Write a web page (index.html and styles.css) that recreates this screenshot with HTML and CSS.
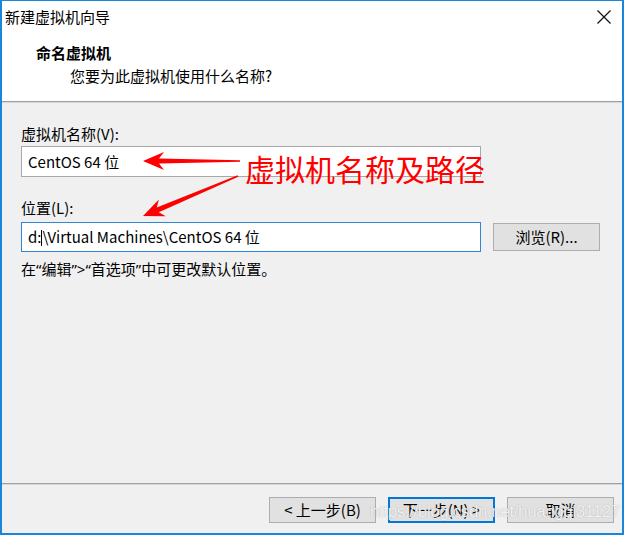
FILE: index.html
```html
<!DOCTYPE html>
<html lang="zh-CN">
<head>
<meta charset="utf-8">
<title>新建虚拟机向导</title>
<link rel="stylesheet" href="styles.css">
</head>
<body>
<div class="window">
  <div class="titlebar">
    <span class="title">新建虚拟机向导</span>
    <svg class="close" width="14" height="14" viewBox="0 0 14 14"><path d="M0.5 0.5 L13.5 13.5 M13.5 0.5 L0.5 13.5" stroke="#111" stroke-width="1.2" fill="none"/></svg>
  </div>
  <div class="header">
    <div class="heading">命名虚拟机</div>
    <div class="subheading">您要为此虚拟机使用什么名称?</div>
  </div>
  <div class="sep"></div>
  <div class="content">
    <div class="label first">虚拟机名称(V):</div>
    <div class="field name">CentOS 64 位</div>
    <div class="label second">位置(L):</div>
    <div class="row">
      <div class="field path focused">d:<span class="caret"></span>\Virtual Machines\CentOS 64 位</div>
      <div class="btn browse">浏览(R)...</div>
    </div>
    <div class="hint">在<span class="q">“</span>编辑<span class="q">”&gt;“</span>首选项<span class="q">”</span>中可更改默认位置。</div>
  </div>
  <div class="sep"></div>
  <div class="footer">
    <div class="btn">&lt; 上一步(B)</div>
    <div class="btn default">下一步(N) &gt;</div>
    <div class="btn">取消</div>
  </div>

  <div class="note">虚拟机名称及路径</div>
  <svg class="arrows" width="624" height="535" viewBox="0 0 624 535">
    <g transform="translate(143 161)">
      <polygon points="0,0 21,-9 16,-2.6 97,-0.8 97,0.8 16,2.6 21,9" fill="#ff0000"/>
    </g>
    <g transform="translate(143 216) rotate(-22.8)">
      <polygon points="0,0 21,-9 16,-2.6 103,-0.8 103,0.8 16,2.6 21,9" fill="#ff0000"/>
    </g>
  </svg>
  <div class="watermark">https://blog.csdn.net/huangqi31127</div>
</div>
</body>
</html>
```
FILE: styles.css
```css
html, body {
  margin: 0;
  padding: 0;
  background: #ffffff;
}

.window {
  position: relative;
  width: 624px;
  height: 535px;
  box-sizing: border-box;
  border: 2px solid #1a86d9;
  border-top-width: 1px;
  background: #f0f0f0;
  display: flex;
  flex-direction: column;
  font-family: "Noto Sans CJK SC", "Noto Sans", sans-serif;
  font-size: 15px;
  color: #000;
  overflow: hidden;
}

.titlebar {
  height: 30px;
  flex: none;
  background: #fff;
  display: flex;
  align-items: center;
  justify-content: space-between;
  padding: 0 11px 0 3px;
}

.title {
  line-height: 20px;
  margin-top: 1px;
}

.close {
  display: block;
  margin-top: 2px;
}

.header {
  height: 70px;
  flex: none;
  background: #fff;
  box-sizing: border-box;
  padding-top: 12px;
}

.heading {
  font-weight: bold;
  line-height: 20px;
  padding-left: 34px;
}

.subheading {
  line-height: 20px;
  margin-top: 3px;
  padding-left: 68px;
}

.sep {
  flex: none;
  height: 1px;
  background: #a0a0a0;
  border-bottom: 1px solid #d8d8d8;
}

.content {
  flex: 1;
  padding: 21px 0 0 19px;
}

.label {
  line-height: 20px;
}

.label.second {
  margin-top: 21px;
}

.field {
  box-sizing: border-box;
  width: 460px;
  height: 31px;
  margin-top: 2px;
  background: #fff;
  border: 1px solid #a8a8a8;
  padding: 0 6px;
  line-height: 29px;
  white-space: nowrap;
}

.field.focused {
  border-color: #2f86d4;
  height: 30px;
  line-height: 28px;
  margin-top: 0;
}

.caret {
  display: inline-block;
  width: 1px;
  height: 16px;
  background: #000;
  vertical-align: -3px;
}

.row {
  display: flex;
  align-items: center;
  gap: 12px;
  margin-top: 4px;
}

.btn {
  box-sizing: border-box;
  width: 107px;
  height: 26px;
  background: #e1e1e1;
  border: 1px solid #adadad;
  display: flex;
  align-items: center;
  justify-content: center;
  line-height: 20px;
  white-space: nowrap;
}

.btn.browse {
  height: 28px;
}

.btn.default {
  border-color: #0078d7;
  box-shadow: inset 0 0 0 1px #0078d7;
}

.hint {
  line-height: 20px;
  margin-top: 7px;
}

.q {
  font-family: "Noto Sans", sans-serif;
}

.footer {
  height: 48px;
  flex: none;
  box-sizing: border-box;
  padding: 12px 8px 0 0;
  display: flex;
  justify-content: flex-end;
  gap: 12px;
}

.note {
  position: absolute;
  left: 243px;
  top: 147px;
  font-size: 30px;
  line-height: 40px;
  color: #ff0000;
  white-space: nowrap;
}

.arrows {
  position: absolute;
  left: -2px;
  top: -1px;
  pointer-events: none;
}

.watermark {
  position: absolute;
  left: 368px;
  top: 501px;
  font-family: "Liberation Sans", Arial, sans-serif;
  font-size: 17px;
  letter-spacing: -0.4px;
  line-height: 20px;
  color: rgba(255, 255, 255, 0.85);
  text-shadow: 0 0 1px rgba(110, 110, 110, 0.6);
  white-space: nowrap;
}
```
